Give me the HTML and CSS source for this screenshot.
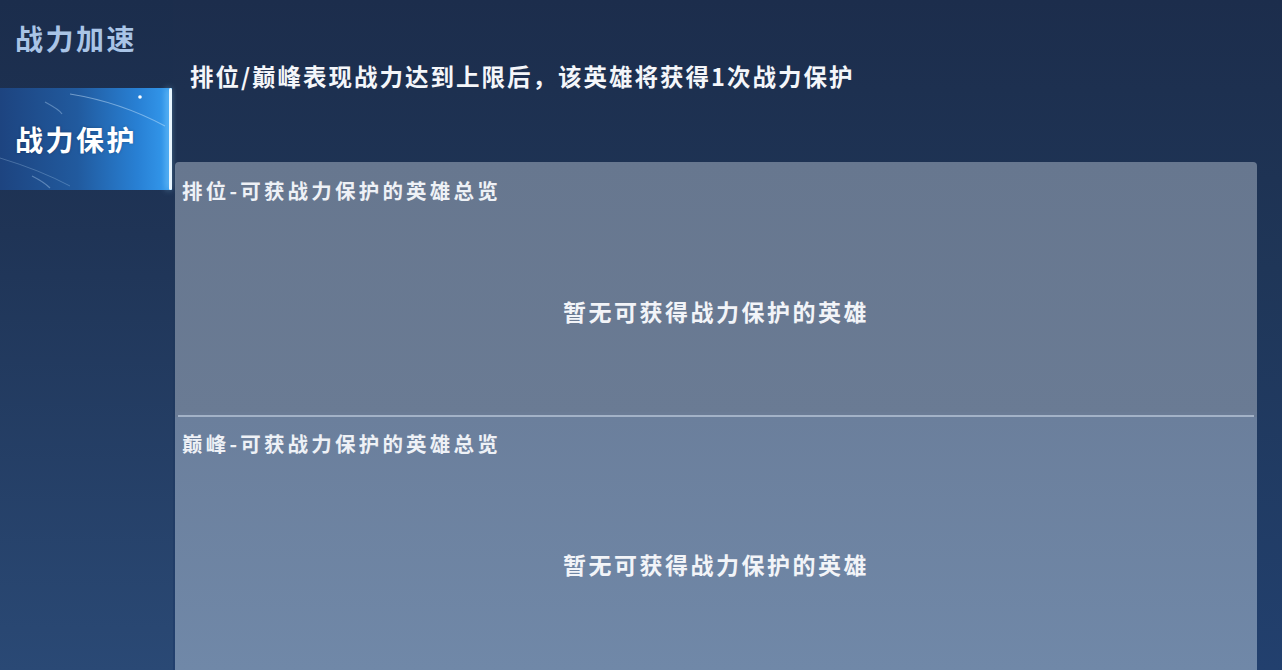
FILE: index.html
```html
<!DOCTYPE html>
<html lang="zh-CN">
<head>
<meta charset="utf-8">
<title>战力保护</title>
<link rel="stylesheet" href="styles.css">
</head>
<body>
<div class="app">
  <nav class="sidebar">
    <div class="nav-item">战力加速</div>
    <div class="nav-item active">
      <svg class="streaks" viewBox="0 0 172 102" preserveAspectRatio="none" aria-hidden="true">
        <path d="M45 14 Q60 22 62 26" stroke="rgba(200,230,255,0.35)" stroke-width="1.2" fill="none"/>
        <path d="M70 6 Q120 14 165 38" stroke="rgba(210,235,255,0.45)" stroke-width="1.2" fill="none"/>
        <path d="M0 70 Q40 82 70 98" stroke="rgba(200,230,255,0.25)" stroke-width="1" fill="none"/>
        <path d="M32 88 Q44 94 50 100" stroke="rgba(200,230,255,0.35)" stroke-width="1.2" fill="none"/>
        <circle cx="140" cy="9" r="1.8" fill="#ffffff"/>
      </svg>
      <span class="label">战力保护</span>
      <span class="edge"></span>
    </div>
  </nav>
  <main class="main">
    <header class="intro">排位/巅峰表现战力达到上限后，该英雄将获得1次战力保护</header>
    <section class="panel">
      <div class="block block-top">
        <h2 class="block-title">排位-可获战力保护的英雄总览</h2>
        <p class="empty">暂无可获得战力保护的英雄</p>
      </div>
      <div class="divider"></div>
      <div class="block block-bottom">
        <h2 class="block-title">巅峰-可获战力保护的英雄总览</h2>
        <p class="empty">暂无可获得战力保护的英雄</p>
      </div>
    </section>
  </main>
</div>
</body>
</html>
```

FILE: styles.css
```css
html, body {
  margin: 0;
  padding: 0;
  height: 100%;
  overflow: hidden;
}
body {
  font-family: "Noto Sans CJK SC", "Noto Sans", sans-serif;
  background: #1d2f4f;
  color: #ffffff;
}
.app {
  display: flex;
  height: 670px;
  width: 1282px;
  background: linear-gradient(180deg, #1c2d4c 0%, #1f3658 40%, #22406e 100%);
}
.sidebar {
  width: 173px;
  flex: 0 0 173px;
  display: flex;
  flex-direction: column;
  background: linear-gradient(180deg, #1b2d4c 0%, #1f3456 35%, #2a4975 100%);
}
.nav-item {
  height: 88px;
  display: flex;
  align-items: center;
  padding-left: 15px;
  padding-bottom: 12px;
  box-sizing: border-box;
  font-size: 28px;
  font-weight: 700;
  letter-spacing: 2.5px;
  color: #a9c4e6;
}
.nav-item.active {
  position: relative;
  height: 102px;
  width: 172px;
  padding-bottom: 0;
  padding-top: 0;
  color: #ffffff;
  background: linear-gradient(90deg, #1d4480 0%, #215a9e 45%, #2880d4 80%, #359cf0 100%);
}
.streaks {
  position: absolute;
  inset: 0;
  width: 100%;
  height: 100%;
}
.label {
  position: relative;
  text-shadow: 0 0 3px rgba(0,0,0,0.25);
}
.edge {
  position: absolute;
  right: 0;
  top: 0;
  width: 3px;
  height: 100%;
  background: #e8f6ff;
  box-shadow: -2px 0 6px rgba(150,220,255,0.8);
  border-radius: 2px;
}
.main {
  flex: 1;
  display: flex;
  flex-direction: column;
  padding: 0 25px 0 2px;
}
.intro {
  height: 162px;
  box-sizing: border-box;
  padding: 60px 0 0 15px;
  font-size: 23.5px;
  line-height: 32px;
  font-weight: 700;
  letter-spacing: 2px;
  color: #f4f6fa;
}
.panel {
  flex: 1;
  display: flex;
  flex-direction: column;
  border-radius: 4px 4px 0 0;
  overflow: hidden;
}
.block {
  padding: 15px 7px 0;
  box-sizing: border-box;
}
.block-top {
  height: 253px;
  background: linear-gradient(180deg, #67778f 0%, #6a7b94 100%);
}
.divider {
  height: 2px;
  background: #a3b2c7;
  margin: 0 3px;
  box-shadow: 0 0 0 3px #6b7c96;
}
.block-bottom {
  flex: 1;
  padding-top: 13px;
  background: linear-gradient(180deg, #6b7f9c 0%, #7088a8 100%);
}
.block-title {
  margin: 0;
  font-size: 20.5px;
  line-height: 26px;
  font-weight: 700;
  letter-spacing: 3.2px;
  color: #eef1f6;
}
.empty {
  margin: 93px 0 0;
  text-align: center;
  font-size: 23px;
  line-height: 30px;
  font-weight: 700;
  letter-spacing: 2.5px;
  color: #f2f4f8;
}
```
